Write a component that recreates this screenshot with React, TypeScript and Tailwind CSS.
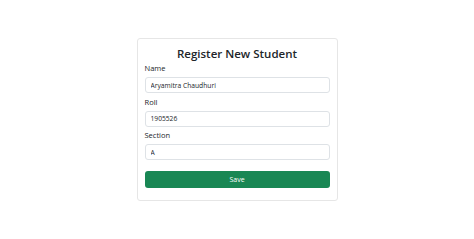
import { useState } from "react";

export default function App() {
  const [name, setName] = useState("Aryamitra Chaudhuri");
  const [roll, setRoll] = useState("1905526");
  const [section, setSection] = useState("A");

  const fields = [
    { label: "Name", value: name, set: setName },
    { label: "Roll", value: roll, set: setRoll },
    { label: "Section", value: section, set: setSection },
  ];

  return (
    <div
      className="min-h-screen bg-white flex justify-center pt-[38px] text-[#212529]"
      style={{ fontFamily: '"Open Sans", "Noto Sans", sans-serif' }}
    >
      <div className="w-[201px] h-[163px] border border-[#e6e6e6] rounded-[3px] px-[7px] pt-[6px]">
        <h1 className="text-[11.5px] leading-[17px] text-center font-semibold mb-[1px]">Register New Student</h1>
        {fields.map((f) => (
          <div key={f.label} className="mb-[3.5px]">
            <label className="block text-[7.5px] leading-[10px] mb-[4px]">{f.label}</label>
            <input
              value={f.value}
              onChange={(e) => f.set(e.target.value)}
              className="block w-full h-[16px] border border-[#dee2e6] rounded-[3px] px-[5px] text-[6.7px] text-[#212529] outline-none"
            />
          </div>
        ))}
        <button className="mt-[7.5px] w-full h-[17px] rounded-[3px] bg-[#198754] text-white text-[7px]">Save</button>
      </div>
    </div>
  );
}
